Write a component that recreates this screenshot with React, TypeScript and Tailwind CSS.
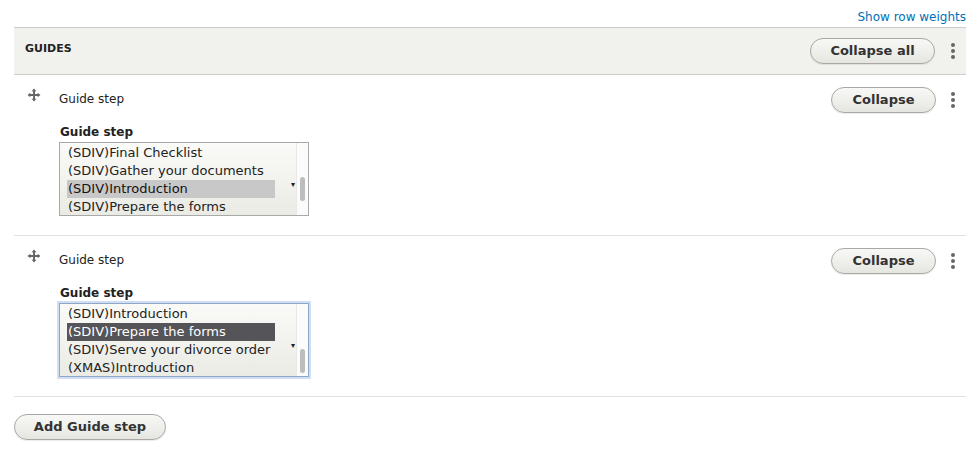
const font = "font-['Lucida_Grande','DejaVu_Sans',sans-serif]";

function MoveIcon() {
  return (
    <svg width="14" height="14" viewBox="0 0 13 13" className="text-[#666]">
      <path d="M6.5 0.5 L8.7 3.1 H7.4 V5.6 H9.9 V4.3 L12.5 6.5 L9.9 8.7 V7.4 H7.4 V9.9 H8.7 L6.5 12.5 L4.3 9.9 H5.6 V7.4 H3.1 V8.7 L0.5 6.5 L3.1 4.3 V5.6 H5.6 V3.1 H4.3 Z" fill="currentColor" />
    </svg>
  );
}

function Dots() {
  return (
    <div className="flex w-[10px] flex-col items-center gap-[2px]">
      <span className="h-[4px] w-[4px] rounded-full bg-[#666]" />
      <span className="h-[4px] w-[4px] rounded-full bg-[#666]" />
      <span className="h-[4px] w-[4px] rounded-full bg-[#666]" />
    </div>
  );
}

function Button({ label, className = "" }: { label: string; className?: string }) {
  return (
    <button
      className={`h-[26px] rounded-full border border-[#a8a8a4] bg-gradient-to-b from-[#f8f8f6] to-[#e6e6e1] text-[13px] font-bold text-[#333] shadow-[0_1px_1px_rgba(0,0,0,0.08)] ${className}`}
    >
      {label}
    </button>
  );
}

function ListBox({ items, selected, focused }: { items: string[]; selected: number; focused?: boolean }) {
  return (
    <div
      className={`relative h-[74px] w-[250px] border bg-gradient-to-b from-[#fafaf8] to-[#ebebe5] ${
        focused ? "border-[#8fa6c9] shadow-[0_0_0_2px_rgba(120,160,220,0.35)]" : "border-[#a9a9a9]"
      }`}
    >
      <div className="flex flex-col pl-[7px] pt-[1px]">
        {items.map((item, i) => (
          <div
            key={item}
            className={`h-[18px] w-[208px] whitespace-nowrap pl-[1px] text-[13px] leading-[18px] ${
              i === selected ? (focused ? "bg-[#555459] text-white" : "bg-[#c8c8c8] text-[#111]") : "text-[#222]"
            }`}
          >
            {item}
          </div>
        ))}
      </div>
      <span className="absolute right-[13px] top-[38px] text-[8px] leading-none text-[#222]">&#x25BE;</span>
      <div className="absolute right-0 top-0 h-full w-[12px] border-l border-[#e8e8e8] bg-[#fbfbfb]">
        <div
          className={`absolute left-[3px] w-[5px] rounded-full bg-[#bdbdbd] ${focused ? "top-[45px] h-[24px]" : "top-[34px] h-[24px]"}`}
        />
      </div>
    </div>
  );
}

function StepRow({ items, selected, focused }: { items: string[]; selected: number; focused?: boolean }) {
  return (
    <div className="flex border-b border-[#e0e0dc] pb-[19px] pl-[11px] pr-[8px] pt-[12px]">
      <div className="flex w-[34px] pt-[1px] pl-[2px]">
        <MoveIcon />
      </div>
      <div className="flex flex-1 flex-col">
        <div className="flex items-start justify-between">
          <span className="pt-[3px] text-[12px] text-[#222]">Guide step</span>
          <div className="flex items-center gap-[12px]">
            <Button label="Collapse" className="w-[105px]" />
            <Dots />
          </div>
        </div>
        <div className="pl-[1px] pt-[11px] text-[12px] font-bold leading-[16px] text-[#222]">Guide step</div>
        <div className="pt-[2px]">
          <ListBox items={items} selected={selected} focused={focused} />
        </div>
      </div>
    </div>
  );
}

export default function App() {
  return (
    <div className={`h-[457px] w-[980px] bg-white ${font}`}>
      <div className="flex h-[27px] items-end justify-end pb-[1px] pr-[14px]">
        <a className="text-[12px] text-[#0071b8]">Show row weights</a>
      </div>
      <div className="ml-[14px] mr-[14px]">
        <div className="flex h-[48px] items-center justify-between border-y border-[#ccccc8] bg-[#f1f1ee] pl-[11px] pr-[8px]">
          <span className="-mt-[4px] text-[11px] font-bold text-[#222]">GUIDES</span>
          <div className="flex items-center gap-[13px]">
            <Button label="Collapse all" className="w-[125px]" />
            <Dots />
          </div>
        </div>
        <StepRow
          items={["(SDIV)Final Checklist", "(SDIV)Gather your documents", "(SDIV)Introduction", "(SDIV)Prepare the forms"]}
          selected={2}
        />
        <StepRow
          items={["(SDIV)Introduction", "(SDIV)Prepare the forms", "(SDIV)Serve your divorce order", "(XMAS)Introduction"]}
          selected={1}
          focused
        />
        <div className="pt-[17px]">
          <Button label="Add Guide step" className="w-[152px]" />
        </div>
      </div>
    </div>
  );
}
